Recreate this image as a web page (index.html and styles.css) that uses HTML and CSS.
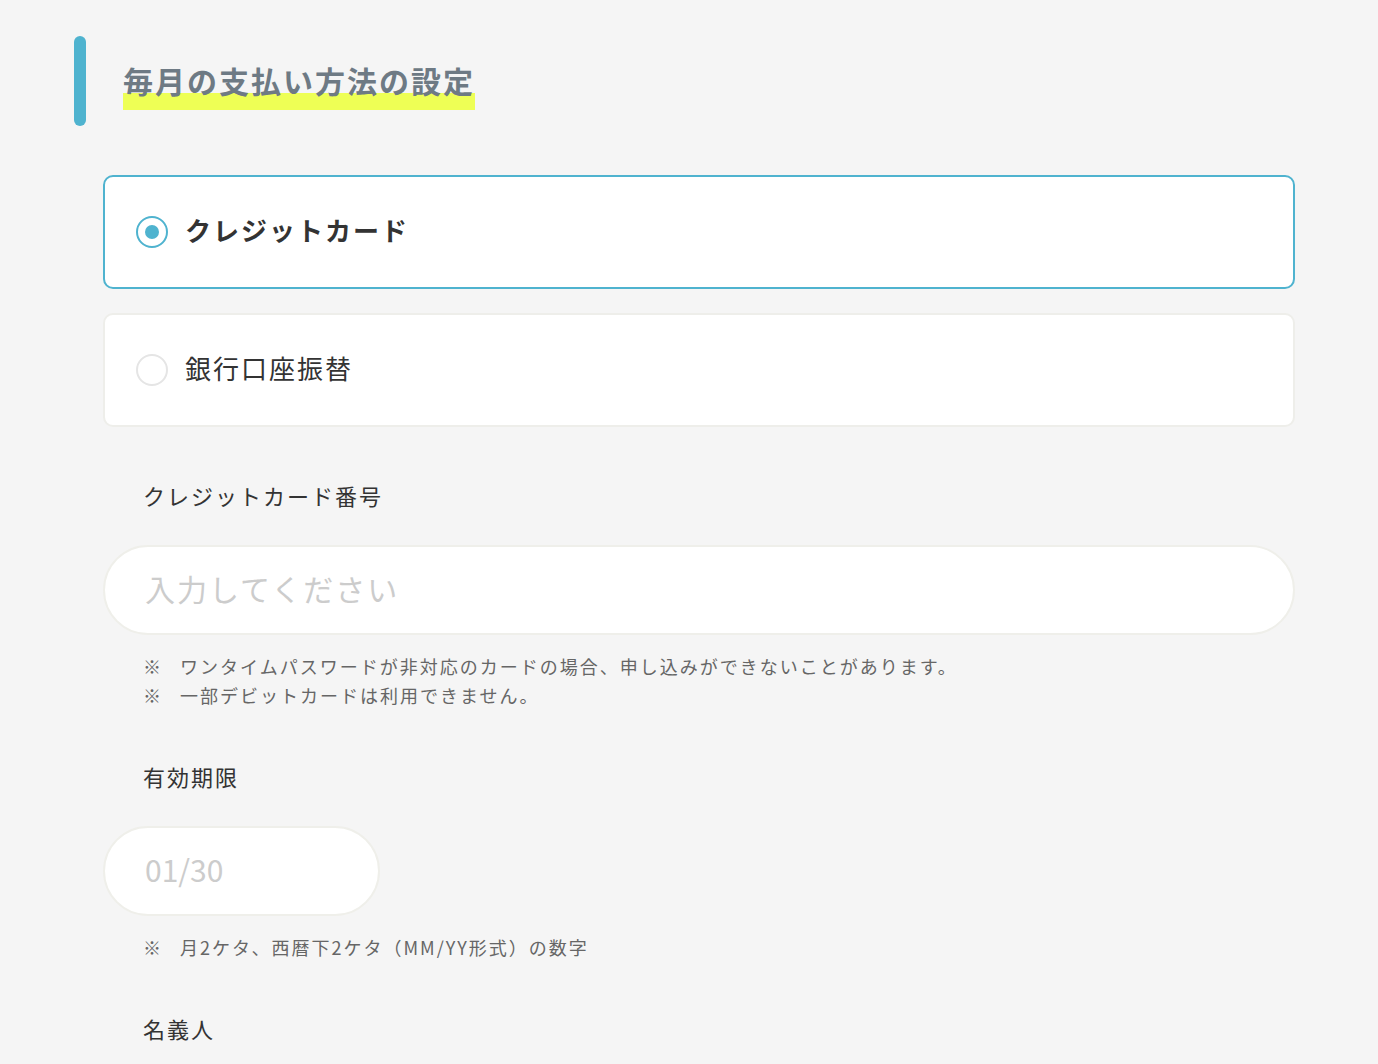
FILE: index.html
```html
<!DOCTYPE html>
<html lang="ja">
<head>
<meta charset="utf-8">
<title>毎月の支払い方法の設定</title>
<link rel="stylesheet" href="styles.css">
</head>
<body>
<main class="page">
  <div class="section-head">
    <span class="head-bar"></span>
    <h2 class="head-title"><span class="marker">毎月の支払い方法の設定</span></h2>
  </div>

  <div class="options">
    <label class="option option-selected">
      <span class="radio radio-on"><span class="radio-dot"></span></span>
      <span class="option-text option-text-bold">クレジットカード</span>
    </label>
    <label class="option">
      <span class="radio"></span>
      <span class="option-text">銀行口座振替</span>
    </label>
  </div>

  <div class="field">
    <div class="field-label">クレジットカード番号</div>
    <input class="text-input" type="text" placeholder="入力してください">
    <ul class="notes">
      <li class="note"><span class="note-mark">※</span>ワンタイムパスワードが非対応のカードの場合、申し込みができないことがあります。</li>
      <li class="note"><span class="note-mark">※</span>一部デビットカードは利用できません。</li>
    </ul>
  </div>

  <div class="field">
    <div class="field-label">有効期限</div>
    <input class="text-input text-input-short" type="text" placeholder="01/30">
    <ul class="notes">
      <li class="note"><span class="note-mark">※</span>月2ケタ、西暦下2ケタ（MM/YY形式）の数字</li>
    </ul>
  </div>

  <div class="field">
    <div class="field-label">名義人</div>
  </div>
</main>
</body>
</html>
```

FILE: styles.css
```css
html, body {
  margin: 0;
  padding: 0;
  background: #f5f5f5;
}
body {
  font-family: "Noto Sans CJK JP", "Noto Sans", sans-serif;
  color: #333333;
  letter-spacing: 2px;
}
.page {
  padding: 36px 83px 0 74px;
}
.section-head {
  display: flex;
  align-items: center;
  gap: 37px;
}
.head-bar {
  display: block;
  width: 12px;
  height: 90px;
  border-radius: 6px;
  background: #4fb3cf;
  flex: none;
}
.head-title {
  margin: 0;
  font-size: 30px;
  font-weight: 700;
  color: #6e7a84;
  line-height: 40px;
}
.marker {
  display: inline-block;
  padding: 0 0 10px 0;
  margin-top: 8px;
  background: linear-gradient(to bottom, transparent 0, transparent 33px, #eeff55 33px, #eeff55 100%);
}
.options {
  margin: 49px 0 0 29px;
  display: flex;
  flex-direction: column;
  gap: 24px;
}
.option {
  display: flex;
  align-items: center;
  gap: 17px;
  height: 110px;
  padding-left: 31px;
  background: #ffffff;
  border: 2px solid #eeeeea;
  border-radius: 10px;
}
.option-selected {
  border-color: #4fb3cf;
}
.radio {
  box-sizing: border-box;
  width: 32px;
  height: 32px;
  border-radius: 50%;
  border: 2px solid #e5e5e5;
  background: #ffffff;
  display: flex;
  align-items: center;
  justify-content: center;
  flex: none;
}
.radio-on {
  border-color: #4fb3cf;
}
.radio-dot {
  width: 14px;
  height: 14px;
  border-radius: 50%;
  background: #4fb3cf;
}
.option-text {
  font-size: 26px;
  line-height: 36px;
  padding-bottom: 5px;
  color: #333333;
}
.option-text-bold {
  font-weight: 700;
}
.field {
  margin: 52px 0 0 29px;
}
.field + .field {
  margin-top: 50px;
}
.field-label {
  padding-left: 40px;
  font-size: 22px;
  line-height: 32px;
  color: #333333;
  margin-bottom: 34px;
}
.text-input {
  display: block;
  box-sizing: border-box;
  width: 100%;
  height: 90px;
  margin: 0;
  padding: 0 40px 4px 40px;
  border: 2px solid #efefea;
  border-radius: 45px;
  background: #ffffff;
  font-family: inherit;
  font-size: 30px;
  letter-spacing: 2px;
  color: #333333;
  outline: none;
}
.text-input::placeholder {
  color: #cccccc;
}
.text-input-short {
  width: 277px;
  letter-spacing: 0;
}
.notes {
  list-style: none;
  margin: 17px 0 0 0;
  padding: 0 0 0 40px;
}
.note {
  font-size: 18px;
  line-height: 29px;
  color: #666666;
}
.note-mark {
  display: inline-block;
  width: 37px;
  letter-spacing: 0;
}
```
